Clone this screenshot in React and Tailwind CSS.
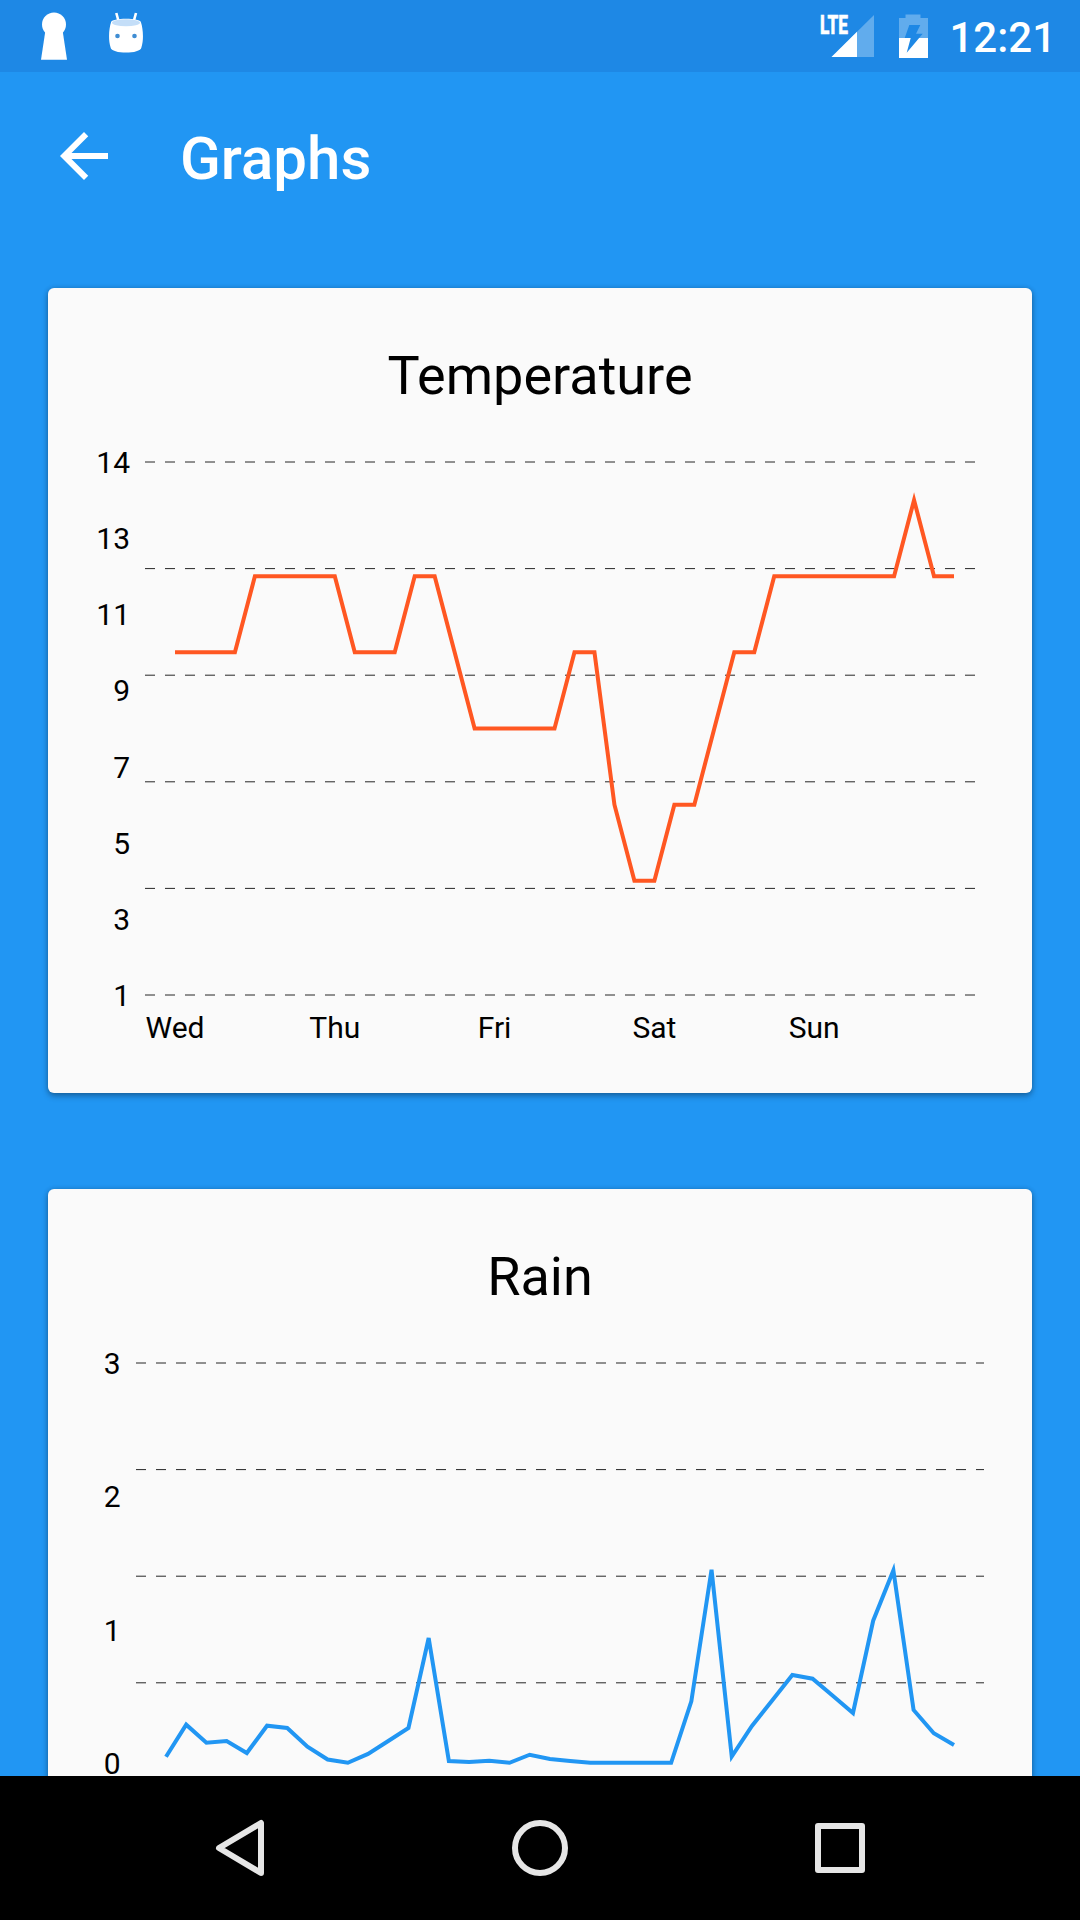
import React from 'react';

const temperature = {
  title: 'Temperature',
  color: '#FF5722',
  min: 1,
  max: 15,
  labels: ['14', '13', '11', '9', '7', '5', '3', '1'],
  days: ['Wed', 'Thu', 'Fri', 'Sat', 'Sun'],
  labelX: 82,
  gridStart: 97,
  gridEnd: 927,
  lineStart: 127,
  values: [
    10, 10, 10, 10, 12, 12, 12, 12, 12, 10, 10, 10, 12, 12, 10, 8, 8, 8, 8, 8,
    10, 10, 6, 4, 4, 6, 6, 8, 10, 10, 12, 12, 12, 12, 12, 12, 12, 14, 12, 12,
  ],
};

const rain = {
  title: 'Rain',
  color: '#2196F3',
  min: -1,
  max: 3,
  labels: ['3', '2', '1', '0', ''],
  days: [],
  labelX: 72.6,
  gridStart: 88,
  gridEnd: 936,
  lineStart: 118,
  values: [
    0.045, 0.286, 0.15, 0.163, 0.073, 0.278, 0.261, 0.12, 0.024, 0,
    0.066, 0.163, 0.261, 0.936, 0.013, 0.006, 0.015, 0, 0.06, 0.028,
    0.013, 0, 0, 0, 0, 0, 0.461, 1.448, 0.047, 0.276,
    0.467, 0.659, 0.631, 0.503, 0.373, 1.066, 1.443, 0.396, 0.221, 0.133,
  ],
};

const LINE_END = 906;
const CHART_TOP = 24;
const CHART_HEIGHT = 533;

function LineChart({ chart }) {
  const step = (LINE_END - chart.lineStart) / (chart.values.length - 1);
  const xAt = (i) => chart.lineStart + i * step;
  const yAt = (value) =>
    CHART_TOP + ((chart.max - value) / (chart.max - chart.min)) * CHART_HEIGHT;
  const points = chart.values.map((v, i) => `${xAt(i)},${yAt(v)}`).join(' ');

  return (
    <svg width="984" height="655" viewBox="0 0 984 655" className="block" fontSize="30">
      {/* Grid */}
      {[0, 1, 2, 3, 4, 5].map((i) => {
        const y = CHART_TOP + (i * CHART_HEIGHT) / 5;
        return (
          <line
            key={i}
            x1={chart.gridStart}
            x2={chart.gridEnd}
            y1={y}
            y2={y}
            stroke="#000"
            strokeOpacity="0.85"
            strokeDasharray="10 10"
          />
        );
      })}

      {/* Y axis */}
      {chart.labels.map((label, i) => (
        <text
          key={label}
          x={chart.labelX}
          y={CHART_TOP + 11 + (i * CHART_HEIGHT) / (chart.labels.length - 1)}
          textAnchor="end"
        >
          {label}
        </text>
      ))}

      {/* X axis, eight readings per day */}
      {chart.days.map((day, i) => (
        <text key={day} x={xAt(i * 8)} y="600" textAnchor="middle">
          {day}
        </text>
      ))}

      <polyline points={points} fill="none" stroke={chart.color} strokeWidth="4" />
    </svg>
  );
}

function GraphCard({ chart }) {
  return (
    <section className="h-[805px] shrink-0 rounded-md bg-[#FAFAFA] shadow-[0_3px_6px_rgba(0,0,0,0.3),0_0_5px_rgba(0,0,0,0.15)]">
      <h2 className="h-[150px] pt-14 text-center text-[54px] leading-[64px]">{chart.title}</h2>
      <LineChart chart={chart} />
    </section>
  );
}

function KeyholeIcon() {
  return (
    <svg width="28" height="48" viewBox="40 12 28 48" fill="#fff">
      <circle cx="54" cy="24.5" r="12" />
      <path d="M45.5 30h17l4.5 29.7H41z" />
    </svg>
  );
}

function AndroidIcon() {
  return (
    <svg width="36" height="42" viewBox="108 12 36 42">
      <path d="M116.3 13l2.2 8M136 13l-2.2 8" stroke="#fff" strokeWidth="2.6" />
      <path
        d="M111 22.5c0-5 30-5 30 0 2 6 3 17 .4 25-.8 6.8-30 6.8-30.8 0-2.6-8-1.6-19 .4-25z"
        fill="#fff"
      />
      <ellipse cx="126" cy="22.7" rx="14" ry="3.5" fill="#C4DEF8" />
      <circle cx="117.5" cy="36" r="2.3" fill="#3F8DD3" />
      <circle cx="134.5" cy="36" r="2.3" fill="#3F8DD3" />
    </svg>
  );
}

function SignalIcon() {
  return (
    <svg width="54" height="46" viewBox="820 12 54 46" className="overflow-visible">
      <path d="M874 15v42h-42.5z" fill="#fff" fillOpacity="0.3" />
      <path d="M857 31.8V57h-25.5z" fill="#fff" />
      <text
        x="820"
        y="33.5"
        fill="#fff"
        stroke="#fff"
        strokeWidth="0.6"
        fontSize="25.5"
        fontWeight="800"
        textLength="28"
        lengthAdjust="spacingAndGlyphs"
      >
        LTE
      </text>
    </svg>
  );
}

function BatteryIcon() {
  return (
    <svg width="29" height="46" viewBox="899 12 29 46">
      <path d="M905.5 14.5h15V18h7.5v20h-29V18h6.5z" fill="#fff" fillOpacity="0.3" />
      <path d="M899 38h29v20h-29z" fill="#fff" />
      <path d="M909.3 25h11l-4.3 8.7h6.7L906.7 52.7l4-14.7h-6z" fill="#1E88E5" />
    </svg>
  );
}

function StatusBar() {
  return (
    <div className="flex h-[72px] shrink-0 items-start justify-between bg-[#1E88E5] pl-10 pr-6 pt-3 text-white">
      <div className="flex gap-10">
        <KeyholeIcon />
        <AndroidIcon />
      </div>
      <div className="flex">
        <SignalIcon />
        <div className="ml-[25px]">
          <BatteryIcon />
        </div>
        <span className="ml-[21px] text-[42px] font-medium leading-[52px]">12:21</span>
      </div>
    </div>
  );
}

function NavigationBar() {
  return (
    <nav className="flex h-36 shrink-0 items-center justify-between bg-black px-[210px]">
      <svg width="60" height="60" viewBox="0 0 60 60" fill="none" stroke="#E6E6E6" strokeWidth="6" strokeLinejoin="round">
        <path d="M51 5v50L9 30z" />
      </svg>
      <svg width="60" height="60" viewBox="0 0 60 60" fill="none" stroke="#E6E6E6" strokeWidth="6">
        <circle cx="30" cy="30" r="25" />
      </svg>
      <svg width="60" height="60" viewBox="0 0 60 60" fill="none" stroke="#E6E6E6" strokeWidth="6" strokeLinejoin="round">
        <path d="M8 8h44v44H8z" />
      </svg>
    </nav>
  );
}

function App() {
  return (
    <div className="flex h-[1920px] w-[1080px] flex-col overflow-hidden bg-[#2196F3] font-['Roboto',sans-serif] text-black">
      <StatusBar />
      <header className="flex h-[168px] shrink-0 items-center px-12 text-white">
        <svg width="72" height="72" viewBox="0 0 24 24" fill="currentColor">
          <path d="M20 11H7.83l5.59-5.59L12 4l-8 8 8 8 1.41-1.41L7.83 13H20v-2z" />
        </svg>
        <h1 className="ml-[60px] pt-1.5 text-[60px] font-medium leading-[70px]">Graphs</h1>
      </header>
      <main className="flex min-h-0 flex-1 flex-col gap-24 overflow-hidden p-12">
        <GraphCard chart={temperature} />
        <GraphCard chart={rain} />
      </main>
      <NavigationBar />
    </div>
  );
}

export default App;
